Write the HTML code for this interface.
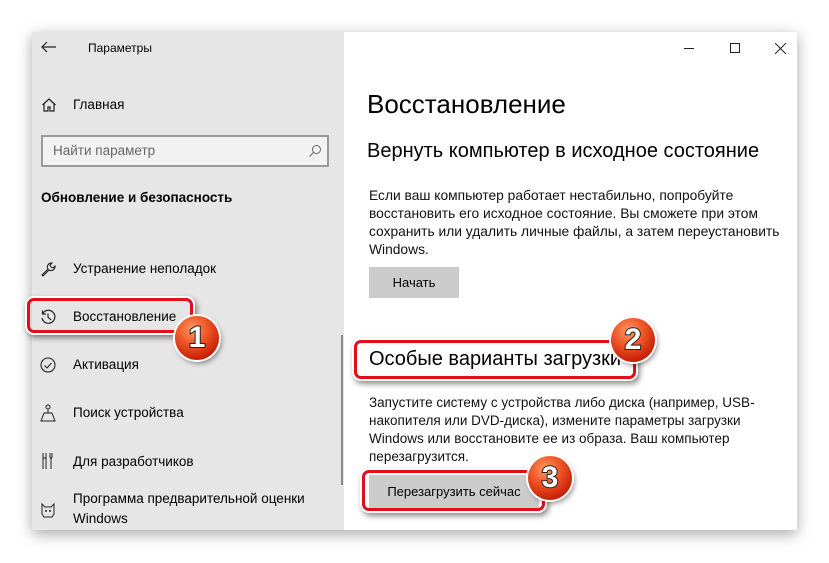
<!DOCTYPE html>
<html><head><meta charset="utf-8"><style>
*{margin:0;padding:0;box-sizing:border-box}
body{width:829px;height:563px;background:#fff;position:relative;overflow:hidden;font-family:"Liberation Sans","Noto Sans CJK SC",sans-serif;color:#000}
.win{position:absolute;left:32px;top:32px;width:765px;height:498px;box-shadow:0 4px 14px rgba(0,0,0,.35);background:#fff}
.side{position:absolute;left:0;top:0;width:312px;height:498px;background:#e6e6e6}
.t{position:absolute;font-size:13.5px;white-space:nowrap}
.ic{position:absolute}
.rb{position:absolute;border:3px solid #e0101a;border-radius:7px;box-shadow:0 0 0 2px #fff,2px 3px 6px 2px rgba(0,0,0,.45)}
.bd{position:absolute;width:44px;height:44px;border-radius:50%;background:radial-gradient(circle at 40% 30%,#ff9a6a 0%,#f05a28 35%,#c81e08 75%,#a01000 100%);box-shadow:0 0 0 2px #fff,2px 3px 6px rgba(0,0,0,.5);color:#fff;font:bold 30px "Liberation Sans",sans-serif;text-align:center;line-height:44px;-webkit-text-stroke:2px #222;paint-order:stroke fill}
p.body{position:absolute;line-height:18px;color:#111;white-space:nowrap}
.btn{position:absolute;background:#ccc;font-size:13px;text-align:center}
</style></head><body>
<div class="win">
<div class="side"></div>
<svg class="ic" style="left:9px;top:9px" width="16" height="12" viewBox="0 0 16 12"><path d="M6 1L1 6l5 5M1 6h14" fill="none" stroke="#222" stroke-width="1.2"/></svg>
<div class="t" style="left:56px;top:9px;font-size:12px">Параметры</div>
<svg class="ic" style="left:9px;top:65px" width="16" height="16" viewBox="0 0 16 16"><path d="M1.5 8L8 2l6.5 6M3 7v7h4v-4h2v4h4V7" fill="none" stroke="#222" stroke-width="1.2"/></svg>
<div class="t" style="left:41px;top:65px">Главная</div>
<div style="position:absolute;left:9px;top:103px;width:288px;height:32px;border:2px solid #999;background:#f2f2f2"></div>
<div class="t" style="left:21px;top:111px;color:#666">Найти параметр</div>
<svg class="ic" style="left:276px;top:112px" width="14" height="14" viewBox="0 0 14 14"><circle cx="8.5" cy="5.5" r="4" fill="none" stroke="#666"/><path d="M5.5 8.5L1.5 12.5" stroke="#666"/></svg>
<div class="t" style="left:9px;top:158px;font-weight:bold">Обновление и безопасность</div>
<svg class="ic" style="left:8px;top:229px" width="16" height="16" viewBox="0 0 16 16"><path d="M2 14l6-6a4 4 0 0 1 4-6l-2 2 1 2 2 1 2-2a4 4 0 0 1-6 4l-6 6z" fill="none" stroke="#222" stroke-width="1.1"/></svg>
<div class="t" style="left:41px;top:229px">Устранение неполадок</div>
<svg class="ic" style="left:8px;top:277px" width="16" height="16" viewBox="0 0 16 16"><path d="M2.5 5A6.5 6.5 0 1 1 2 9M2.5 1.5V5H6M8 4.5V8l3 3" fill="none" stroke="#222" stroke-width="1.2"/></svg>
<div class="t" style="left:41px;top:277px">Восстановление</div>
<svg class="ic" style="left:8px;top:325px" width="16" height="16" viewBox="0 0 16 16"><circle cx="8" cy="8" r="7" fill="none" stroke="#222" stroke-width="1.1"/><path d="M4.5 8.5l2.5 2.5 4.5-5" fill="none" stroke="#222" stroke-width="1.1"/></svg>
<div class="t" style="left:41px;top:325px">Активация</div>
<svg class="ic" style="left:8px;top:372px" width="16" height="18" viewBox="0 0 16 18"><circle cx="8" cy="3" r="2" fill="none" stroke="#222"/><path d="M8 5v4M4 9h8l3 8H1zM1 17h14" fill="none" stroke="#222"/></svg>
<div class="t" style="left:41px;top:373px">Поиск устройства</div>
<svg class="ic" style="left:9px;top:420px" width="14" height="18" viewBox="0 0 14 18"><path d="M2 1v16M5 1v16M2 6h3M9 1v4l1 2 1-2V1M10 7v10" fill="none" stroke="#222"/></svg>
<div class="t" style="left:41px;top:422px">Для разработчиков</div>
<svg class="ic" style="left:8px;top:470px" width="16" height="16" viewBox="0 0 16 16"><path d="M2 2l3 3h6l3-3v10l-2 3H4l-2-3z" fill="none" stroke="#222"/><circle cx="6" cy="9" r="1" fill="#222"/><circle cx="10" cy="9" r="1" fill="#222"/></svg>
<div class="t" style="left:41px;top:459px">Программа предварительной оценки</div>
<div class="t" style="left:41px;top:479px">Windows</div>
<div style="position:absolute;left:309px;top:303px;width:2px;height:150px;background:#8a8a8a"></div>
<div style="position:absolute;left:652px;top:16px;width:10px;height:1px;background:#222"></div>
<div style="position:absolute;left:698px;top:11px;width:10px;height:10px;border:1px solid #222"></div>
<svg class="ic" style="left:743px;top:11px" width="11" height="11"><path d="M0 0L11 11M11 0L0 11" stroke="#222"/></svg>
<div class="t" style="left:335px;top:57px;font-size:26px;font-weight:300">Восстановление</div>
<div class="t" style="left:335px;top:108px;font-size:20px">Вернуть компьютер в исходное состояние</div>
<p class="body" style="left:337px;top:155px;font-size:13.8px">Если ваш компьютер работает нестабильно, попробуйте<br>восстановить его исходное состояние. Вы сможете при этом<br>сохранить или удалить личные файлы, а затем переустановить<br>Windows.</p>
<div class="btn" style="left:337px;top:235px;width:90px;height:31px;line-height:31px">Начать</div>
<div class="t" style="left:337px;top:316px;font-size:20px">Особые варианты загрузки</div>
<p class="body" style="left:337px;top:362px;font-size:13.5px">Запустите систему с устройства либо диска (например, USB-<br>накопителя или DVD-диска), измените параметры загрузки<br>Windows или восстановите ее из образа. Ваш компьютер<br>перезагрузится.</p>
<div class="btn" style="left:337px;top:443px;width:170px;height:34px;line-height:34px">Перезагрузить сейчас</div>
</div>
<div class="rb" style="left:27px;top:298px;width:166px;height:35px"></div>
<div class="rb" style="left:354px;top:340px;width:282px;height:39px"></div>
<div class="rb" style="left:362px;top:470px;width:183px;height:41px"></div>
<div class="bd" style="left:175px;top:316px">1</div>
<div class="bd" style="left:611px;top:318px">2</div>
<div class="bd" style="left:528px;top:456px">3</div>
</body></html>
